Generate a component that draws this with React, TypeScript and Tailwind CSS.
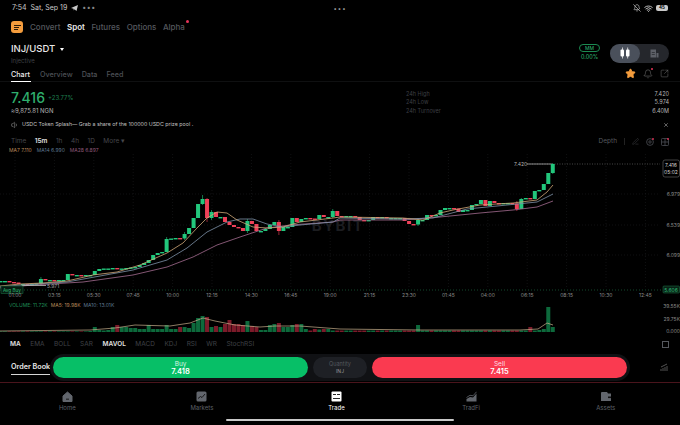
import { Bell, BellOff, PenLine, SquareArrowOutUpRight, Star, Volume1, Wifi, X } from 'lucide-react';

const closes = [
  281, 281, 282, 282.5, 284, 284, 284.5, 284, 283.5, 279, 280, 280, 280.5, 280, 280, 274, 275, 275, 275.5, 275,
  275, 271, 269, 268.5, 268.5, 268, 268.5, 268.5, 268, 267.5, 267, 265, 263, 260, 255, 253, 252, 239, 238.5, 238,
  238.5, 234, 228, 218, 204, 199, 218, 212, 217, 217, 222, 225, 227, 228, 231, 221, 224, 231, 231, 229,
  225, 222, 231, 227, 227, 218, 222, 219, 218, 218.5, 219, 215, 217, 217, 211, 216, 217, 216, 216, 217,
  220, 221, 220, 217, 217.5, 217, 218, 218, 218, 218, 221, 224, 224.5, 220, 220, 215, 216, 215, 210, 208,
  208, 208.5, 212, 210, 210, 205, 204, 200, 206, 201, 203, 204, 203, 203, 203.5, 209, 199, 198, 199, 191,
  190, 184, 173, 164,
];

const wicks: Record<number, [number, number]> = {
  9: [277, 285], 37: [237, 251], 41: [232, 240], 45: [195, 205], 46: [198, 222], 47: [210, 220], 55: [219, 233],
  62: [220, 235], 74: [209, 218], 93: [218, 226], 115: [201, 211], 116: [198, 209], 123: [163, 174],
};

const volumeOverrides: Record<number, number> = {
  20: 1, 21: 5, 22: 2, 24: 2, 25: 5, 26: 7, 27: 5, 28: 5, 29: 4, 30: 4, 31: 3, 32: 3, 33: 7, 34: 3, 35: 3, 36: 3, 37: 7,
  38: 3, 39: 3, 40: 5, 41: 5, 42: 4, 43: 9, 44: 14, 45: 16, 46: 15, 47: 5, 48: 6, 49: 5, 50: 8, 51: 12, 52: 8, 53: 8,
  54: 7, 55: 11, 56: 6, 57: 5, 58: 2, 59: 2, 60: 7, 61: 8, 62: 9, 63: 5, 64: 5, 65: 7, 66: 8, 67: 8, 68: 3, 70: 3,
  71: 2.5, 72: 3, 73: 3, 93: 7, 118: 5, 120: 2, 121: 3, 122: 25, 123: 5,
};

const ma7 = '0,286 20,284 43,283 67,281 93,275 117,272 140,265 167,253 183,243 197,228 207,218 217,212 227,213 237,220 253,227 267,228 283,227 300,222 333,218 340,217 403,218 423,220 440,213 453,210 480,205 513,203 537,200 547,192 553,185';
const ma14 = '0,287 20,285 67,282 100,276 133,270 167,260 187,248 207,232 227,222 240,219 253,219 267,224 283,227 300,225 333,222 340,218 403,219 433,218 467,209 507,205 537,202 553,194';
const ma28 = '0,288 33,285 83,282 133,275 167,267 193,257 217,245 240,237 267,228 290,225 333,222 340,220 403,220 440,217 480,213 513,210 537,207 553,201';
const volMa = '0,331 90,330 115,328 135,325 170,326 190,323 203,318 215,321 235,325 260,327 275,326 300,326 340,329 420,330 520,330 538,329 547,323 553,325';

const timeLabels = ['01:00', '03:15', '05:30', '07:45', '10:00', '12:15', '14:30', '16:45', '19:00', '21:15', '23:30', '01:45', '04:00', '06:15', '08:15', '10:30', '12:45'];
const indicators = ['MA', 'EMA', 'BOLL', 'SAR', 'MAVOL', 'MACD', 'KDJ', 'RSI', 'WR', 'StochRSI'];

const candleX = (i: number) => 0.5 + 4.49 * i;
const isUp = (i: number) => i === 0 || closes[i] <= closes[i - 1];

function CandleIcon() {
  return (
    <svg width="12" height="12" viewBox="0 0 12 12" fill="white">
      <rect x="1.5" y="2.5" width="3.5" height="7" rx="1" />
      <rect x="3" y="0.5" width="0.7" height="11" />
      <rect x="7" y="2.5" width="3.5" height="7" rx="1" />
      <rect x="8.4" y="0.5" width="0.7" height="11" />
    </svg>
  );
}

function TradingChart() {
  return (
    <svg width="680" height="146" viewBox="0 154 680 146" className="block overflow-hidden">
      {timeLabels.map((_, i) => (
        <line key={i} x1={15 + 39.4 * i} x2={15 + 39.4 * i} y1="154" y2="289" stroke="#1b1c1e" strokeWidth="0.6" strokeDasharray="1 2" />
      ))}
      {[194, 225, 255].map((y) => (
        <line key={y} x1="0" x2="660" y1={y} y2={y} stroke="#1b1c1e" strokeWidth="0.6" strokeDasharray="1 2" />
      ))}
      <line x1="0" x2="662" y1="290" y2="290" stroke="#1f7a4a" strokeWidth="0.6" strokeDasharray="1 2" />
      <line x1="527" x2="660" y1="164" y2="164" stroke="#777" strokeWidth="0.6" strokeDasharray="1 1.5" />
      <line x1="527" x2="552" y1="164" y2="164" stroke="#aaa" strokeWidth="0.8" />
      <text x="338" y="231" textAnchor="middle" fontSize="15" fontWeight="700" fill="#1c1d20" letterSpacing="1.5" fontFamily="Inter, sans-serif">BYBIT</text>
      {closes.map((close, i) => {
        const open = i === 0 ? close : closes[i - 1];
        const top = Math.min(open, close);
        const h = Math.max(Math.abs(open - close), 1.4);
        const color = isUp(i) ? '#22c77c' : '#ef4058';
        const wick = wicks[i];
        return (
          <g key={i}>
            {wick && <line x1={candleX(i)} x2={candleX(i)} y1={wick[0]} y2={wick[1]} stroke={color} strokeWidth="0.6" />}
            <rect x={candleX(i) - 2} y={top} width="4" height={h} fill={color} />
          </g>
        );
      })}
      <polyline points={ma28} fill="none" stroke="#a56c90" strokeWidth="0.8" />
      <polyline points={ma14} fill="none" stroke="#7e92a8" strokeWidth="0.8" />
      <polyline points={ma7} fill="none" stroke="#d0a878" strokeWidth="0.8" />
      <line x1="22" x2="46" y1="285.5" y2="285.5" stroke="#bbb" strokeWidth="0.8" />
      <text x="47" y="288" fontSize="5" fill="#a5a5a5" fontFamily="Inter, sans-serif">5.971</text>
      <text x="514" y="166" fontSize="5" fill="#b5b5b5" fontFamily="Inter, sans-serif">7.420</text>
      {[['6.979', 196], ['6.539', 227], ['6.099', 257]].map(([label, y]) => (
        <text key={label} x="680" y={y} textAnchor="end" fontSize="5" fill="#8a8a8a" fontFamily="Inter, sans-serif">{label}</text>
      ))}
      <rect x="663" y="160" width="16.5" height="17" rx="2" fill="#000" stroke="#6b6b6b" strokeWidth="0.6" />
      <text x="671" y="166.5" textAnchor="middle" fontSize="5" fill="#d5d5d5" fontFamily="Inter, sans-serif">7.416</text>
      <text x="671" y="173.5" textAnchor="middle" fontSize="5" fill="#d5d5d5" fontFamily="Inter, sans-serif">05:02</text>
      <rect x="663" y="286" width="16.5" height="7" rx="1" fill="#082015" stroke="#1f7a4a" strokeWidth="0.5" />
      <text x="671" y="291.5" textAnchor="middle" fontSize="5" fill="#2fbf77" fontFamily="Inter, sans-serif">5.606</text>
      <rect x="1" y="286" width="22" height="7.5" fill="#061a10" stroke="#1f7a4a" strokeWidth="0.5" />
      <text x="3" y="291.5" fontSize="4.6" fill="#2fbf77" fontFamily="Inter, sans-serif">Avg Buy</text>
      {timeLabels.map((label, i) => (
        <text key={i} x={15 + 39.4 * i} y="297" textAnchor="middle" fontSize="5" fill="#8a8a8a" fontFamily="Inter, sans-serif">{label}</text>
      ))}
    </svg>
  );
}

function VolumeChart() {
  return (
    <svg width="680" height="24" viewBox="0 311 680 24" className="block overflow-visible">
      {closes.map((_, i) => {
        const h = volumeOverrides[i] ?? (i < 20 ? 0.6 : 1.5);
        return <rect key={i} x={candleX(i) - 2} y={332 - h} width="4" height={h} fill={isUp(i) ? '#0d6a3c' : '#7c1b2a'} />;
      })}
      <polyline points={volMa} fill="none" stroke="#c9b08c" strokeWidth="0.7" />
      {[['39.55K', 308], ['29.75K', 321], ['0.000', 333]].map(([label, y]) => (
        <text key={label} x="680" y={y} textAnchor="end" fontSize="5" fill="#8a8a8a" fontFamily="Inter, sans-serif">{label}</text>
      ))}
    </svg>
  );
}

function BottomNav() {
  const gray = '#62666d';
  return (
    <div className="grid h-[42px] grid-cols-5 bg-black pr-[7px] pt-[8px] text-[6px] leading-[8px] text-[#5e6168]">
      <div className="flex flex-col items-center gap-[2px]">
        <svg width="11" height="11" viewBox="0 0 11 11">
          <path d="M1 5 L5.5 1 L10 5 V10.5 H1 Z" fill={gray} stroke={gray} strokeLinejoin="round" />
          <rect x="4" y="7.7" width="3" height="0.9" fill="#111" />
        </svg>
        <span>Home</span>
      </div>
      <div className="flex flex-col items-center gap-[2px]">
        <svg width="11" height="11" viewBox="0 0 11 11">
          <rect x="0.5" y="0.5" width="10" height="10" rx="1.5" fill={gray} />
          <path d="M2 7.5 L4.5 5.5 L6 6.5 L9 3" fill="none" stroke="#111" strokeWidth="0.9" />
        </svg>
        <span>Markets</span>
      </div>
      <div className="flex flex-col items-center gap-[2px] text-white">
        <svg width="11" height="11" viewBox="0 0 11 11">
          <rect x="0.5" y="0.5" width="10" height="10" rx="1" fill="white" />
          <rect x="2" y="3" width="3" height="0.9" fill="#111" />
          <rect x="6" y="3" width="3" height="0.9" fill="#111" />
          <rect x="2" y="7" width="7" height="0.9" fill="#111" />
        </svg>
        <span>Trade</span>
      </div>
      <div className="flex flex-col items-center gap-[2px]">
        <svg width="11" height="11" viewBox="0 0 11 11">
          <path d="M0.5 10.5 V8 L4 6 L7 6.5 L10.5 2.5 V10.5 Z" fill={gray} />
          <path d="M0.5 6.5 L4 4.3 L7 4.8 L10.5 0.8" fill="none" stroke={gray} strokeWidth="0.8" />
        </svg>
        <span>TradFi</span>
      </div>
      <div className="flex flex-col items-center gap-[2px]">
        <svg width="12" height="11" viewBox="0 0 12 11">
          <path d="M1 2 Q1 1 2 1 H7 L8 2.5 H11 V10 H1 Z" fill={gray} />
          <rect x="8" y="5.5" width="3" height="1.6" fill="#111" />
        </svg>
        <span>Assets</span>
      </div>
    </div>
  );
}

export default function App() {
  return (
    <div className="relative h-[425px] w-[680px] overflow-hidden bg-black font-['Inter',sans-serif] text-white">
      {/* status bar */}
      <div className="flex h-[16px] items-center px-[12px] text-[7px] text-[#c9c9c9]">
        <div className="flex flex-1 items-center gap-[4px]">
          <span>7:54</span>
          <span>Sat, Sep 19</span>
          <svg width="7" height="6" viewBox="0 0 7 6" fill="#c9c9c9">
            <path d="M0 3 L7 0 L5.5 6 L3.5 4.2 L2.8 5.5 L2.5 3.8 Z" />
          </svg>
          <span className="tracking-[0.5px] text-[#888]">•••</span>
        </div>
        <span className="tracking-[1px] text-[6px] text-[#aaa]">•••</span>
        <div className="flex flex-1 items-center justify-end gap-[3px]">
          <BellOff size={8} strokeWidth={2} />
          <Wifi size={9} strokeWidth={2.5} />
          <span className="flex h-[6px] w-[12px] items-center justify-center rounded-[2px] bg-[#c9c9c9] text-[4.5px] font-bold text-black">45</span>
        </div>
      </div>

      {/* spot tabs */}
      <div className="flex h-[22px] items-center gap-[6.5px] px-[11px] text-[8px] font-medium text-[#55585e]">
        <div className="mr-[0.5px] flex h-[12px] w-[12px] flex-col justify-center gap-[1px] rounded-[3px] bg-[#f39c3d] pl-[2.5px]">
          <div className="h-[1px] w-[7px] bg-[#2b1a07]" />
          <div className="h-[1px] w-[5.5px] bg-[#2b1a07]" />
          <div className="h-[1px] w-[4px] bg-[#2b1a07]" />
        </div>
        <span>Convert</span>
        <span className="font-semibold text-[#e8e8e8]">Spot</span>
        <span>Futures</span>
        <span>Options</span>
        <span className="relative">
          Alpha
          <span className="absolute right-[-4px] top-[-1px] h-[3px] w-[3px] rounded-full bg-[#e8345a]" />
        </span>
      </div>

      {/* pair row */}
      <div className="flex h-[30px] items-center justify-between pl-[11px] pr-[11px]">
        <div className="flex flex-col">
          <div className="flex items-center gap-[5px] text-[9.5px] font-medium leading-[16px] text-[#e8e8e8]">
            INJ/USDT
            <span className="h-0 w-0 border-x-[2.5px] border-t-[3px] border-x-transparent border-t-white" />
          </div>
          <span className="text-[6px] leading-[8px] text-[#3f4146]">Injective</span>
        </div>
        <div className="flex items-center gap-[10px]">
          <div className="flex flex-col items-center">
            <span className="flex h-[8px] w-[21px] items-center justify-center rounded-full border border-[#1c8a52] text-[5px] text-[#2fbf77]">MM</span>
            <span className="mt-[1px] text-[5.5px] text-[#2fbf77]">0.00%</span>
          </div>
          <div className="flex h-[19px] w-[59px] rounded-full bg-[#25272c]">
            <div className="flex w-[30px] items-center justify-center rounded-full bg-[#4a505b]">
              <CandleIcon />
            </div>
            <div className="flex flex-1 items-center justify-center">
              <svg width="9" height="9" viewBox="0 0 9 9" fill="#5d6067">
                <path d="M0.5 0.5 H6 V8.5 H0.5 Z M6.5 4 H8.5 V8.5 H6.5 Z" />
                <rect x="1.8" y="3" width="3" height="0.7" fill="#25272c" />
                <rect x="1.8" y="5" width="3" height="0.7" fill="#25272c" />
              </svg>
            </div>
          </div>
        </div>
      </div>

      {/* chart tabs */}
      <div className="flex h-[14px] items-start justify-between border-b border-[#0f1011] px-[11px] text-[7.2px] font-medium text-[#4d5056]">
        <div className="flex gap-[9px] pt-[1px]">
          <span className="h-[13px] w-[20px] border-b border-white leading-[11px] text-[#ededed]">Chart</span>
          <span className="leading-[11px]">Overview</span>
          <span className="leading-[11px]">Data</span>
          <span className="leading-[11px]">Feed</span>
        </div>
        <div className="flex items-center gap-[7px] text-[#777]">
          <Star size={11} fill="#f39c3d" stroke="#f39c3d" />
          <span className="relative">
            <Bell size={10} strokeWidth={1.3} />
            <span className="absolute right-0 top-[-1px] h-[2px] w-[2px] rounded-full bg-[#e8345a]" />
          </span>
          <SquareArrowOutUpRight size={9} strokeWidth={1.3} />
        </div>
      </div>

      {/* price and 24h stats */}
      <div className="flex h-[36px] justify-between px-[11px] pt-[7px]">
        <div className="flex flex-col">
          <div className="flex items-center gap-[3px]">
            <span className="text-[14px] font-medium leading-[17px] text-[#2fae6d]">7.416</span>
            <span className="text-[6px] text-[#1f7e50]">+23.77%</span>
          </div>
          <span className="mt-[1px] text-[6px] leading-[8px] text-[#b5b5b5]">≈9,875.81 NGN</span>
        </div>
        <div className="mt-[1px] grid h-fit w-[263px] grid-cols-[1fr_auto] text-[5.5px] leading-[8.3px]">
          <span className="text-[#3d3f44]">24h High</span>
          <span className="text-right text-[#b5b5b5]">7.420</span>
          <span className="text-[#3d3f44]">24h Low</span>
          <span className="text-right text-[#b5b5b5]">5.974</span>
          <span className="text-[#3d3f44]">24h Turnover</span>
          <span className="text-right text-[#b5b5b5]">6.40M</span>
        </div>
      </div>

      {/* announcement */}
      <div className="flex h-[14px] items-center justify-between px-[11px] text-[5.3px] text-[#c0c0c0]">
        <div className="flex items-center gap-[3px]">
          <Volume1 size={8} strokeWidth={1.3} />
          <span>USDC Token Splash— Grab a share of the 100000 USDC prize pool .</span>
        </div>
        <X size={6} strokeWidth={2} />
      </div>

      {/* interval row */}
      <div className="mt-[3px] flex h-[13px] items-center justify-between px-[11px] text-[6.5px] text-[#45474c]">
        <div className="flex items-center gap-[8.5px]">
          <span>Time</span>
          <span className="font-semibold text-[#e0e0e0]">15m</span>
          <span>1h</span>
          <span>4h</span>
          <span>1D</span>
          <span>More ▾</span>
        </div>
        <div className="flex items-center gap-[7px] text-[#55585e]">
          <span>Depth</span>
          <div className="h-[7px] w-px bg-[#222]" />
          <PenLine size={7} strokeWidth={1.3} />
          <svg width="8" height="8" viewBox="0 0 8 8" fill="none" stroke="#55585e" strokeWidth="0.7">
            <circle cx="4" cy="4" r="3.4" />
            <circle cx="4" cy="4" r="1.2" />
            <circle cx="7" cy="1" r="0.9" fill="#e8345a" stroke="none" />
          </svg>
          <svg width="8" height="8" viewBox="0 0 8 8" fill="none" stroke="#55585e" strokeWidth="0.7">
            <rect x="0.5" y="0.5" width="7" height="7" rx="0.8" />
            <path d="M0.5 4 H7.5 M4 0.5 V7.5" />
            <circle cx="7" cy="1" r="0.9" fill="#e8345a" stroke="none" />
          </svg>
        </div>
      </div>

      {/* MA legend */}
      <div className="flex h-[6px] items-center gap-[5px] px-[9px] text-[5px]">
        <span className="text-[#b8895a]">MA7 7.110</span>
        <span className="text-[#5f7890]">MA14 6.990</span>
        <span className="text-[#8f5878]">MA28 6.897</span>
      </div>

      <TradingChart />

      {/* volume legend */}
      <div className="flex h-[11px] items-center gap-[3px] px-[9px] text-[5px]">
        <span className="text-[#1f8a55]">VOLUME: 11.72K</span>
        <span className="text-[#b8895a]">MA5: 19.98K</span>
        <span className="text-[#5f7890]">MA10: 13.01K</span>
      </div>

      <VolumeChart />

      {/* indicator row */}
      <div className="flex h-[19px] items-center justify-between px-[10px] text-[6.5px] text-[#3f4146]">
        <div className="flex gap-[9.5px]">
          {indicators.map((name) => (
            <span key={name} className={name === 'MA' || name === 'MAVOL' ? 'font-semibold text-[#e0e0e0]' : ''}>
              {name}
            </span>
          ))}
        </div>
        <div className="mr-[1px] h-[7px] w-[7px] border border-[#55585e]" />
      </div>

      {/* order book row, mostly covered by the trade bar */}
      <div className="flex h-[29px] items-start justify-between border-b border-[#4a141c] px-[11px] pt-[6px]">
        <span className="h-[15px] border-b border-[#d5d5d5] text-[7.2px] font-semibold leading-[14px] text-[#e8e8e8]">Order Book</span>
        <svg width="9" height="9" viewBox="0 0 9 9" fill="none" stroke="#777" strokeWidth="0.7" className="mt-[3px]">
          <path d="M1 8 V6 M3 8 V5 M5 8 V4 M7 8 V3 M1 4 L7 1" />
        </svg>
      </div>

      <BottomNav />

      {/* trade bar */}
      <div className="absolute left-[50px] top-[354px] flex h-[27px] w-[580px] items-center gap-[5px] rounded-[14px] bg-[#101114] px-[3px]">
        <div className="flex h-[21px] w-[255px] flex-col items-center justify-center rounded-full bg-[#07bf67] leading-[8px]">
          <span className="text-[6.5px] text-[#d7f5e5]">Buy</span>
          <span className="text-[7.5px] font-semibold">7.418</span>
        </div>
        <div className="flex h-[21px] w-[54px] flex-col items-center justify-center rounded-full bg-[#1e2025] leading-[7px]">
          <span className="text-[5.5px] text-[#55585e]">Quantity</span>
          <span className="text-[5px] text-[#9a9a9a]">INJ</span>
        </div>
        <div className="flex h-[21px] w-[255px] flex-col items-center justify-center rounded-full bg-[#fa3a50] leading-[8px]">
          <span className="text-[6.5px] text-[#ffdfe3]">Sell</span>
          <span className="text-[7.5px] font-semibold">7.415</span>
        </div>
      </div>

      {/* home indicator */}
      <div className="absolute bottom-[4px] left-[226px] h-[2px] w-[228px] rounded-full bg-[#c9c9c9]" />
    </div>
  );
}
